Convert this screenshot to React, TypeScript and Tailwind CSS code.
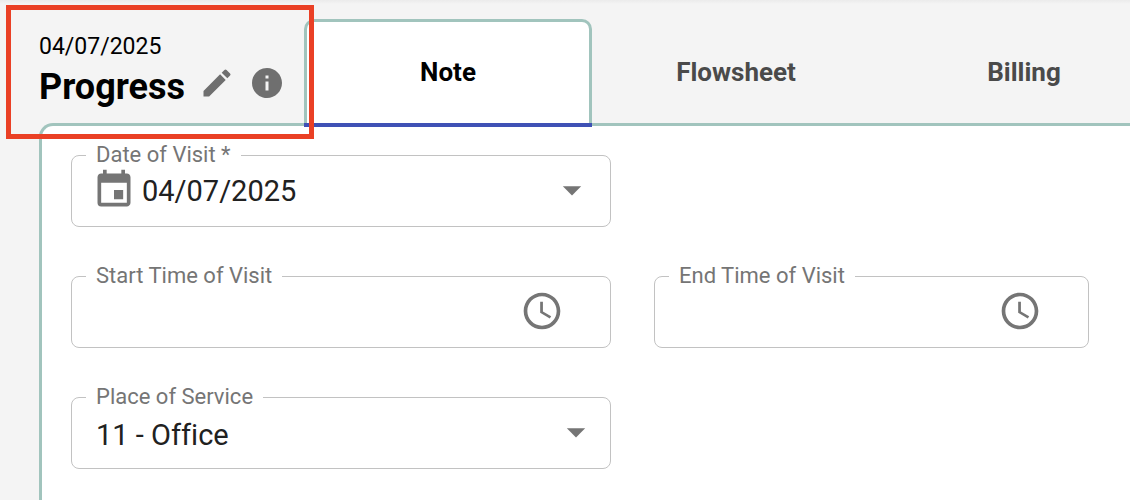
import { useState, type ReactNode } from "react";
import { MdAccessTime, MdArrowDropDown, MdEdit, MdEvent, MdInfo } from "react-icons/md";

const tabs = ["Note", "Flowsheet", "Billing"];

interface FieldProps {
  id: string;
  label: string;
  children: ReactNode;
}

function Field({ id, label, children }: FieldProps) {
  return (
    <fieldset className="min-w-0 rounded-lg border border-[#c2c2c2] pb-3.5">
      <legend className="ml-3.5 px-2.5 text-[22px] leading-[26px] text-[#757575]">
        <label htmlFor={id}>{label}</label>
      </legend>
      {children}
    </fieldset>
  );
}

function TimeField({ id, label }: { id: string; label: string }) {
  const [value, setValue] = useState("");

  return (
    <Field id={id} label={label}>
      <div className="flex h-11 items-center pr-[46px] pl-6">
        <input
          id={id}
          type="text"
          value={value}
          onChange={(e) => setValue(e.target.value)}
          className="min-w-0 flex-1 pt-0.5 text-[29px] text-[#212121] outline-none"
        />
        <button type="button" aria-label={`Choose ${label}`}>
          <MdAccessTime className="size-11 text-[#757575]" />
        </button>
      </div>
    </Field>
  );
}

export default function App() {
  const [activeTab, setActiveTab] = useState("Note");
  const [visitDate, setVisitDate] = useState("04/07/2025");

  return (
    <div className="relative flex min-h-screen flex-col overflow-hidden bg-[#f4f4f4] font-['Roboto',sans-serif] [font-variant-ligatures:none]">
      <header className="relative z-10 flex bg-linear-to-b from-[#ebebeb] to-transparent to-[4px]">
        <div className="w-[304px] shrink-0 pt-[33px] pl-[39px]">
          <p className="text-[23px] leading-7 text-black">04/07/2025</p>
          <div className="mt-1 flex h-9 items-center">
            <h1 className="pt-2 text-[36px] leading-9 font-bold text-black">Progress</h1>
            <button type="button" aria-label="Edit note type" className="ml-3.5">
              <MdEdit className="size-9 text-[#6f6f6f]" />
            </button>
            <button type="button" aria-label="Note information" className="ml-3.5">
              <MdInfo className="size-9 text-[#6f6f6f]" />
            </button>
          </div>
        </div>
        <nav className="flex pt-[19px]" role="tablist">
          {tabs.map((tab) => {
            const active = tab === activeTab;
            return (
              <button
                key={tab}
                type="button"
                role="tab"
                aria-selected={active}
                onClick={() => setActiveTab(tab)}
                className="flex h-[108px] w-72 shrink-0 flex-col text-[26px] font-bold"
              >
                <span
                  className={`flex w-full flex-1 items-center justify-center rounded-t-[10px] border-x-3 border-t-3 ${
                    active ? "border-[#a1c4bd] bg-white text-black" : "border-transparent text-[#4a4a4a]"
                  }`}
                >
                  {tab}
                </span>
                <span className={`h-1 w-full ${active ? "bg-[#3f51b5]" : ""}`} />
              </button>
            );
          })}
        </nav>
      </header>

      <main className="-mt-1 ml-[39px] flex-1 rounded-tl-[14px] border-t-3 border-l-3 border-[#a1c4bd] bg-white pt-4 pr-[41px] pb-8 pl-[29px]">
        <form className="grid grid-cols-[36fr_29fr] gap-x-[43px] gap-y-9">
          <div className="col-start-1">
            <Field id="visit-date" label="Date of Visit *">
              <div className="flex h-11 items-center pr-4 pl-5">
                <MdEvent className="size-11 shrink-0 text-[#757575]" />
                <input
                  id="visit-date"
                  type="text"
                  value={visitDate}
                  onChange={(e) => setVisitDate(e.target.value)}
                  className="ml-1.5 min-w-0 flex-1 pt-1 text-[29px] text-[#212121] outline-none"
                />
                <button type="button" aria-label="Open calendar">
                  <MdArrowDropDown className="size-11 text-[#757575]" />
                </button>
              </div>
            </Field>
          </div>
          <div className="col-start-1">
            <TimeField id="start-time" label="Start Time of Visit" />
          </div>
          <TimeField id="end-time" label="End Time of Visit" />
          <div className="col-start-1">
            <Field id="place" label="Place of Service">
              <div className="relative">
                <select
                  id="place"
                  defaultValue="11"
                  className="block h-11 w-full appearance-none pt-1 pr-14 pl-6 text-[29px] text-[#212121] outline-none"
                >
                  <option value="11">11 - Office</option>
                </select>
                <MdArrowDropDown className="pointer-events-none absolute top-0 right-3 size-11 text-[#757575]" />
              </div>
            </Field>
          </div>
        </form>
      </main>

      {/* highlight around the note title */}
      <div className="pointer-events-none absolute top-[5px] left-1.5 z-20 h-[134px] w-[308px] border-5 border-[#ea4025]" />
    </div>
  );
}
